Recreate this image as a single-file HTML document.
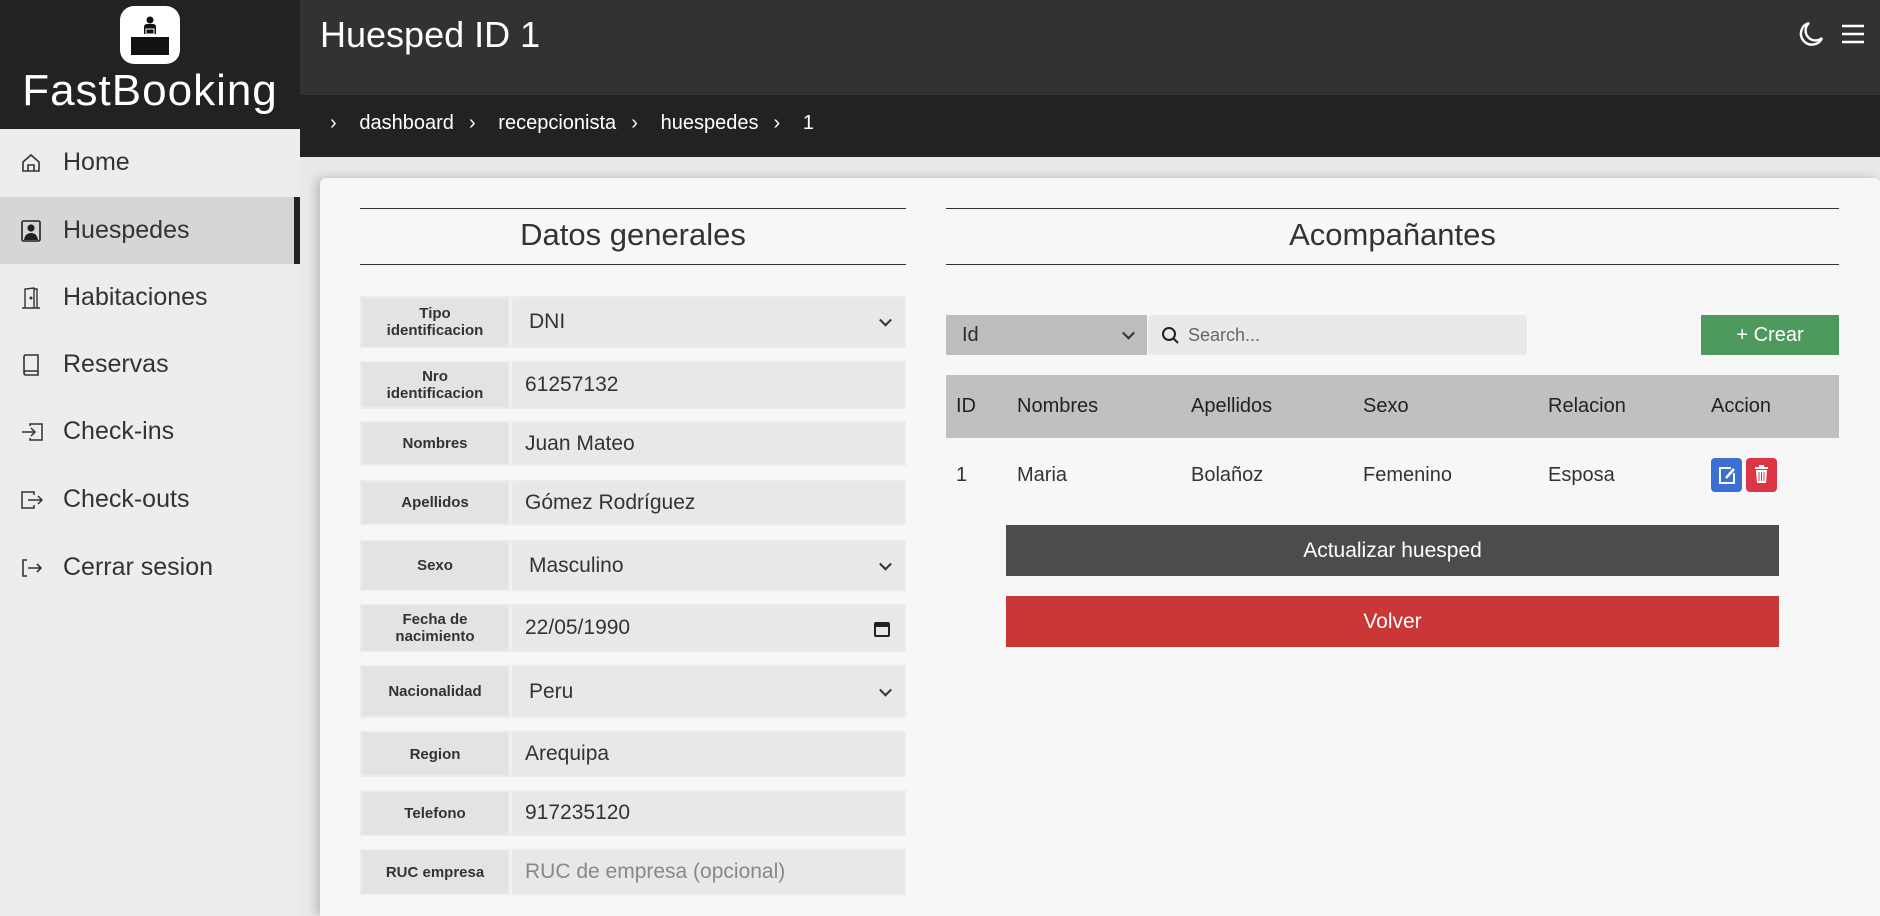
<!DOCTYPE html>
<html style="width:1880px;height:916px;overflow:hidden"><head><meta charset="utf-8"><style>
*{box-sizing:border-box;margin:0;padding:0}
body{width:1880px;height:916px;overflow:hidden;background:#e9e9e9;font-family:"Liberation Sans",sans-serif;color:#2b2b2b;position:relative}
.a{position:absolute}
#side{left:0;top:0;width:300px;height:916px;background:#ededed}
#logo{left:0;top:0;width:300px;height:129px;background:#222}
.mi{position:absolute;left:0;width:300px;height:67px;display:flex;align-items:center;font-size:25px;color:#333}
.mi svg{position:absolute;left:21px}
.mi span{position:absolute;left:63px}
.lab{position:absolute;left:360px;width:150px;background:#e3e3e3;display:flex;align-items:center;justify-content:center;text-align:center;font-size:15px;font-weight:bold;line-height:17px;color:#333;border:2px solid #ebebeb}
.inp{position:absolute;left:511px;width:395px;background:#e8e8e8;display:flex;align-items:center;padding-left:12px;font-size:21px;color:#333;border:2px solid #ececec}
.sel::after{content:"";position:absolute;right:14px;top:50%;width:7px;height:7px;border-right:2px solid #333;border-bottom:2px solid #333;transform:translateY(-70%) rotate(45deg)}
.th{position:absolute;top:375px;height:63px;line-height:63px;font-size:20px;color:#222}
.td{position:absolute;top:455px;height:40px;line-height:40px;font-size:20px;color:#333}
.btn{position:absolute;left:1006px;width:773px;height:51px;color:#fff;font-size:21px;display:flex;align-items:center;justify-content:center}
</style></head><body>
<div id="side" class="a"></div>
<div id="logo" class="a">
 <div class="a" style="left:120px;top:6px;width:60px;height:58px;background:#fff;border-radius:14px">
  <svg width="60" height="58" viewBox="0 0 60 58"><circle cx="30" cy="14" r="3.5" fill="#111"/><path d="M24 28v-7q0-3 3-3h6q3 0 3 3v7z" fill="#111"/><rect x="26" y="23" width="8" height="5" fill="none" stroke="#fff" stroke-width="1"/><rect x="11" y="31" width="38" height="18" fill="#111"/></svg>
 </div>
 <div class="a" style="left:0;width:300px;top:66px;text-align:center;color:#fff;font-size:44px;letter-spacing:1px">FastBooking</div>
</div>
<div class="a" style="left:0;top:197px;width:294px;height:67px;background:#d7d6d6"></div>
<div class="a" style="left:294px;top:197px;width:6px;height:67px;background:#222"></div>
<div class="mi" style="top:129px"><svg width="20" height="20" viewBox="0 0 20 20" fill="none" stroke="#333" stroke-width="1.6"><path d="M2 9L10 2l8 7v9H2z"/><path d="M7 18v-6h6v6"/></svg><span>Home</span></div>
<div class="mi" style="top:197px"><svg width="20" height="22" viewBox="0 0 20 22"><rect x="1" y="1" width="18" height="20" rx="1.5" fill="none" stroke="#222" stroke-width="1.6"/><circle cx="10" cy="8" r="3.6" fill="#222"/><path d="M3 20q1-7 7-7t7 7z" fill="#222"/></svg><span>Huespedes</span></div>
<div class="mi" style="top:264px"><svg width="20" height="22" viewBox="0 0 20 22" fill="none" stroke="#333" stroke-width="1.4"><path d="M1 21h18M4 21V2l9-1v20M13 2h3v19"/><circle cx="10" cy="11" r=".8" fill="#333"/></svg><span>Habitaciones</span></div>
<div class="mi" style="top:331px"><svg width="20" height="22" viewBox="0 0 20 22" fill="none" stroke="#333" stroke-width="1.6"><path d="M3 18V3q0-2 2-2h12v16H5q-2 0-2 2t2 2h12v-4"/></svg><span>Reservas</span></div>
<div class="mi" style="top:398px"><svg width="22" height="20" viewBox="0 0 22 20" fill="none" stroke="#333" stroke-width="1.5"><path d="M9 4V2h12v16H9v-2M1 10h13M10 6l4 4-4 4"/></svg><span>Check-ins</span></div>
<div class="mi" style="top:466px"><svg width="22" height="20" viewBox="0 0 22 20" fill="none" stroke="#333" stroke-width="1.5"><path d="M13 5V2H1v16h12v-3M7 10h14M17 6l4 4-4 4"/></svg><span>Check-outs</span></div>
<div class="mi" style="top:534px"><svg width="22" height="20" viewBox="0 0 22 20" fill="none" stroke="#333" stroke-width="1.6"><path d="M6 2H2v16h4M7 10h13M16 6l4 4-4 4"/></svg><span>Cerrar sesion</span></div>

<div class="a" style="left:300px;top:0;width:1580px;height:95px;background:#323232"></div>
<div class="a" style="left:320px;top:14px;color:#fff;font-size:36px">Huesped ID 1</div>
<svg class="a" style="left:1797px;top:21px" width="27" height="27" viewBox="0 0 27 27" fill="none" stroke="#fff" stroke-width="2.4"><path d="M12 2A11 11 0 1 0 25 17 8 8 0 0 1 12 2z"/></svg>
<svg class="a" style="left:1841px;top:24px" width="24" height="20" viewBox="0 0 24 20" stroke="#fff" stroke-width="2.4"><path d="M1 2h22M1 10h22M1 18h22"/></svg>
<div class="a" style="left:300px;top:95px;width:1580px;height:62px;background:#222"></div>
<div class="a" style="left:330px;top:112px;color:#fff;font-size:20px;word-spacing:2px">›&nbsp;&nbsp; dashboard &nbsp;›&nbsp;&nbsp; recepcionista &nbsp;›&nbsp;&nbsp; huespedes &nbsp;›&nbsp;&nbsp; 1</div>

<div class="a" style="left:320px;top:178px;width:1560px;height:738px;background:#f7f7f7;border-radius:6px 6px 0 0;box-shadow:-4px 0 10px rgba(0,0,0,.2)"></div>

<div class="a" style="left:360px;top:208px;width:546px;height:1px;background:#333"></div>
<div class="a" style="left:360px;top:217px;width:546px;text-align:center;font-size:31px;color:#333">Datos generales</div>
<div class="a" style="left:360px;top:264px;width:546px;height:1px;background:#333"></div>

<div class="lab" style="top:296px;height:52px">Tipo<br>identificacion</div><div class="inp sel" style="top:296px;height:52px;padding-left:16px">DNI</div>
<div class="lab" style="top:361px;height:48px">Nro<br>identificacion</div><div class="inp" style="top:361px;height:48px">61257132</div>
<div class="lab" style="top:421px;height:45px">Nombres</div><div class="inp" style="top:421px;height:45px">Juan Mateo</div>
<div class="lab" style="top:480px;height:45px">Apellidos</div><div class="inp" style="top:480px;height:45px">Gómez Rodríguez</div>
<div class="lab" style="top:540px;height:51px">Sexo</div><div class="inp sel" style="top:540px;height:51px;padding-left:16px">Masculino</div>
<div class="lab" style="top:604px;height:48px">Fecha de<br>nacimiento</div><div class="inp" style="top:604px;height:48px">22/05/1990
 <svg class="a" style="right:14px;top:15px" width="16" height="16" viewBox="0 0 16 16"><rect x="1" y="2" width="14" height="13" rx="1" fill="none" stroke="#222" stroke-width="2"/><rect x="1" y="2" width="14" height="4" fill="#222"/></svg></div>
<div class="lab" style="top:665px;height:53px">Nacionalidad</div><div class="inp sel" style="top:665px;height:53px;padding-left:16px">Peru</div>
<div class="lab" style="top:731px;height:46px">Region</div><div class="inp" style="top:731px;height:46px">Arequipa</div>
<div class="lab" style="top:790px;height:46px">Telefono</div><div class="inp" style="top:790px;height:46px">917235120</div>
<div class="lab" style="top:849px;height:46px">RUC empresa</div><div class="inp" style="top:849px;height:46px;color:#888">RUC de empresa (opcional)</div>

<div class="a" style="left:946px;top:208px;width:893px;height:1px;background:#333"></div>
<div class="a" style="left:946px;top:217px;width:893px;text-align:center;font-size:31px;color:#333">Acompañantes</div>
<div class="a" style="left:946px;top:264px;width:893px;height:1px;background:#333"></div>

<div class="a sel" style="left:946px;top:315px;width:201px;height:40px;background:#bdbdbd;font-size:20px;line-height:40px;padding-left:16px">Id</div>
<div class="a" style="left:1148px;top:315px;width:379px;height:40px;background:#e9e9e9;border-radius:3px;font-size:18px;line-height:40px;padding-left:40px;color:#666">Search...
 <svg class="a" style="left:13px;top:11px" width="19" height="19" viewBox="0 0 19 19" fill="none" stroke="#222" stroke-width="2"><circle cx="8" cy="8" r="6"/><path d="M12.5 12.5L17 17"/></svg></div>
<div class="a" style="left:1701px;top:315px;width:138px;height:40px;background:#4e9a5e;color:#fff;font-size:20px;line-height:40px;text-align:center">+ Crear</div>

<div class="a" style="left:946px;top:375px;width:893px;height:63px;background:#c1bfbf"></div>
<div class="th" style="left:956px">ID</div>
<div class="th" style="left:1017px">Nombres</div>
<div class="th" style="left:1191px">Apellidos</div>
<div class="th" style="left:1363px">Sexo</div>
<div class="th" style="left:1548px">Relacion</div>
<div class="th" style="left:1711px">Accion</div>
<div class="td" style="left:956px">1</div>
<div class="td" style="left:1017px">Maria</div>
<div class="td" style="left:1191px">Bolañoz</div>
<div class="td" style="left:1363px">Femenino</div>
<div class="td" style="left:1548px">Esposa</div>
<div class="a" style="left:1711px;top:458px;width:31px;height:34px;background:#3b6fd3;border-radius:4px"><svg width="31" height="34" viewBox="0 0 31 34" fill="none" stroke="#fff" stroke-width="2"><path d="M20 10H9v15h14V15"/><path d="M15 20l8-9" stroke-width="2.6"/></svg></div>
<div class="a" style="left:1746px;top:458px;width:31px;height:34px;background:#dc3545;border-radius:4px"><svg width="31" height="34" viewBox="0 0 31 34" fill="#fff"><rect x="9" y="9" width="13" height="2"/><rect x="13" y="7" width="5" height="2"/><path d="M10 12h11l-1 13H11z"/><path d="M13 14v9M15.5 14v9M18 14v9" stroke="#dc3545" stroke-width="1"/></svg></div>

<div class="btn" style="top:525px;background:#4d4c4a">Actualizar huesped</div>
<div class="btn" style="top:596px;background:#c93737">Volver</div>
</body></html>
